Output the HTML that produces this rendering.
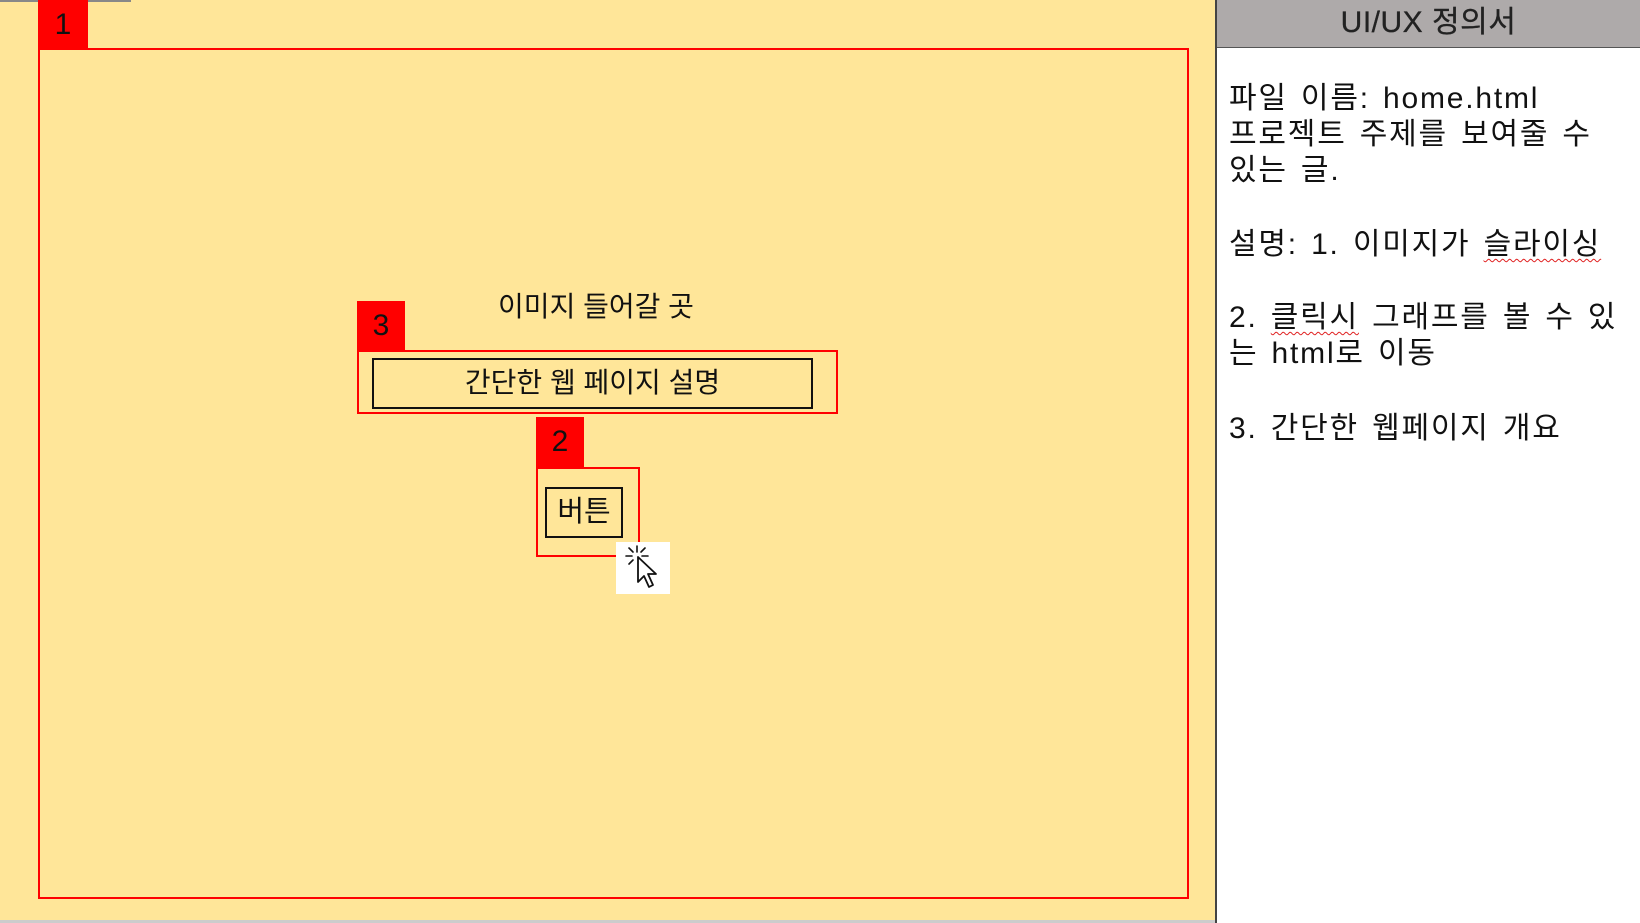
<!DOCTYPE html>
<html><head><meta charset="utf-8"><style>
*{margin:0;padding:0;box-sizing:border-box}
html,body{width:1640px;height:923px;overflow:hidden;background:#ffe699;position:relative;font-family:"Liberation Sans","Noto Sans CJK KR",sans-serif;color:#111}
.a{position:absolute}
.lab{background:#ff0000;color:#111;font-size:30px;text-align:center;line-height:50px}
.rr{border:2px solid #ff0000}
.bb{border:2.5px solid #111}
.panel{left:1215px;top:0;width:425px;height:923px;background:#fff;border-left:2px solid #444}
.hd{left:0;top:0;width:100%;height:48px;background:#aeaaaa;border-bottom:1px solid #555;font-size:30px;text-align:center;line-height:46px;color:#222;letter-spacing:0.5px;-webkit-text-stroke:0.3px #222}
.tx{left:12px;font-size:30px;line-height:36px;white-space:nowrap;color:#111;letter-spacing:1.8px;word-spacing:3px}
.sq{text-decoration:underline wavy #e02020;text-decoration-thickness:1px;text-underline-offset:4px}
</style></head><body>
<div class="a" style="left:0;top:0;width:131px;height:2px;background:#888"></div>
<div class="a" style="left:0;top:920px;width:1215px;height:3px;background:#ccc"></div>
<div class="a rr" style="left:38px;top:48px;width:1151px;height:851px"></div>
<div class="a lab" style="left:38px;top:0;width:50px;height:49px">1</div>

<div class="a" style="left:400px;top:287px;width:392px;text-align:center;font-size:28px;line-height:40px">이미지 들어갈 곳</div>
<div class="a lab" style="left:357px;top:301px;width:48px;height:50px">3</div>
<div class="a rr" style="left:357px;top:350px;width:481px;height:64px"></div>
<div class="a bb" style="left:372px;top:358px;width:441px;height:51px;font-size:28px;text-align:center;line-height:46px">간단한 웹 페이지 설명</div>

<div class="a lab" style="left:536px;top:417px;width:48px;height:51px">2</div>
<div class="a rr" style="left:536px;top:467px;width:104px;height:90px"></div>
<div class="a bb" style="left:545px;top:487px;width:78px;height:51px;font-size:29px;text-align:center;line-height:46px">버튼</div>
<div class="a" style="left:616px;top:542px;width:54px;height:52px;background:#fff">
<svg width="54" height="52" viewBox="0 0 54 52">
<g stroke="#111" stroke-width="1.6" fill="none" stroke-linecap="round">
<line x1="21" y1="4" x2="21" y2="10"/><line x1="10" y1="14" x2="16" y2="14"/><line x1="26" y1="14" x2="32" y2="14"/>
<line x1="13" y1="6" x2="17" y2="10"/><line x1="29" y1="6" x2="25" y2="10"/><line x1="13" y1="22" x2="17" y2="18"/>
</g>
<path d="M22 15 L22 40 L28 34 L33 45 L37 43 L32 32 L40 32 Z" fill="#fff" stroke="#111" stroke-width="1.8" stroke-linejoin="round"/>
</svg></div>

<div class="a panel">
<div class="a hd">UI/UX 정의서</div>
<div class="a tx" style="top:81px">파일 이름: home.html</div>
<div class="a tx" style="top:117px">프로젝트 주제를 보여줄 수</div>
<div class="a tx" style="top:153px">있는 글.</div>
<div class="a tx" style="top:227px">설명: 1. 이미지가 <span class="sq">슬라이싱</span></div>
<div class="a tx" style="top:300px">2. <span class="sq">클릭시</span> 그래프를 볼 수 있</div>
<div class="a tx" style="top:336px">는 html로 이동</div>
<div class="a tx" style="top:411px">3. 간단한 웹페이지 개요</div>
</div>
</body></html>
